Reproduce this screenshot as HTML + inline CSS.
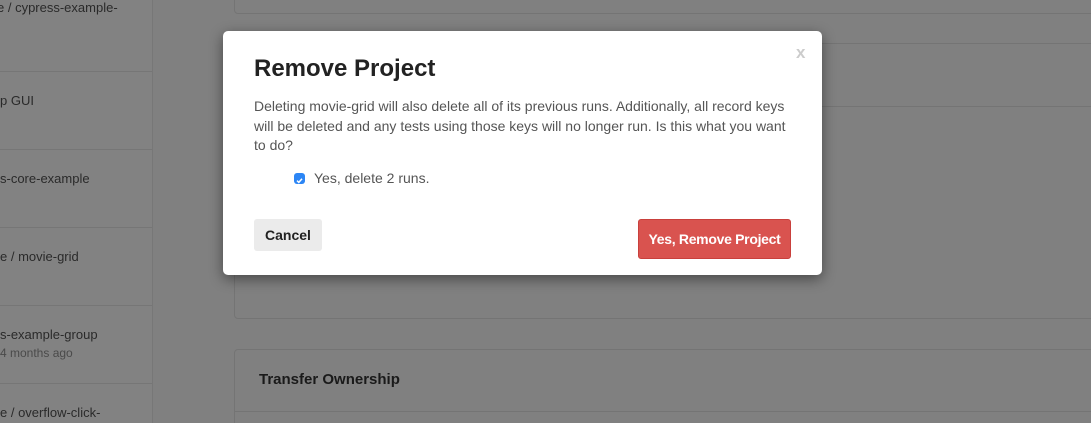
<!DOCTYPE html>
<html style="height:423px;overflow:hidden"><head><style>
body{margin:0;width:1091px;height:423px;overflow:hidden;background:#808080;font-family:"Liberation Sans",sans-serif;position:relative}
.side{position:absolute;left:0;top:0;width:152px;height:423px;background:#828282;border-right:1px solid #777}
.row{position:absolute;left:0;width:152px;border-top:1px solid #767676}
.st{position:absolute;left:0;font-size:13px;color:#2a2a2a;white-space:nowrap}
.p{position:absolute;left:234px;width:900px;border:1px solid #747474;border-radius:4px;background:#808080}
.hl{position:absolute;left:234px;width:900px;border-top:1px solid #747474}
.modal{position:absolute;left:223px;top:31px;width:599px;height:244px;background:#fff;border-radius:5px;box-shadow:0 4px 14px rgba(0,0,0,.45)}
h1{position:absolute;left:31px;top:24px;margin:0;font-size:24px;font-weight:600;color:#222}
.txt{position:absolute;left:31px;top:66px;width:545px;font-size:14px;line-height:19.5px;color:#555}
.x{position:absolute;left:573px;top:12px;font-size:17px;font-weight:bold;color:#ccc}
.cb{position:absolute;left:71px;top:142px;width:11px;height:11px;background:#2c86f5;border-radius:3px}
.cbl{position:absolute;left:91px;top:139px;font-size:14px;color:#555}
.cancel{position:absolute;left:31px;top:188px;width:68px;height:32px;background:#ebebeb;border-radius:3px;font-size:14px;font-weight:600;color:#222;text-align:center;line-height:32px}
.red{position:absolute;left:415px;top:188px;width:153px;height:40px;background:#d9534f;border:1px solid #c9403c;border-radius:3px;box-sizing:border-box;font-size:14px;font-weight:bold;color:#fff;text-align:center;line-height:38px;letter-spacing:-.3px}
</style></head><body>
<div class="side">
<div class="st" style="top:0px;left:-3px">e / cypress-example-</div>
<div class="row" style="top:71px"></div>
<div class="st" style="top:93px">p GUI</div>
<div class="row" style="top:149px"></div>
<div class="st" style="top:171px">s-core-example</div>
<div class="row" style="top:227px"></div>
<div class="st" style="top:249px">e / movie-grid</div>
<div class="row" style="top:305px"></div>
<div class="st" style="top:327px">s-example-group</div>
<div class="st" style="top:346px;color:#4a4a4a;font-size:12px">4 months ago</div>
<div class="row" style="top:383px"></div>
<div class="st" style="top:405px">e / overflow-click-</div>
</div>
<div class="p" style="top:-10px;height:22px"></div>
<div class="p" style="top:43px;height:274px"></div>
<div class="hl" style="top:106px"></div>
<div class="p" style="top:349px;height:90px;border-radius:4px 4px 0 0"></div>
<div class="hl" style="top:411px"></div>
<div style="position:absolute;left:259px;top:371px;font-size:15px;font-weight:bold;color:#1a1a1a">Transfer Ownership</div>
<div class="modal">
<div class="x">x</div>
<h1>Remove Project</h1>
<div class="txt">Deleting movie-grid will also delete all of its previous runs. Additionally, all record keys will be deleted and any tests using those keys will no longer run. Is this what you want to do?</div>
<div class="cb"><svg width="11" height="11" viewBox="0 0 11 11"><path d="M3 5.6L4.8 7.4L8 3.8" stroke="#fff" stroke-width="1.5" fill="none"/></svg></div>
<div class="cbl">Yes, delete 2 runs.</div>
<div class="cancel">Cancel</div>
<div class="red">Yes, Remove Project</div>
</div>
</body></html>
